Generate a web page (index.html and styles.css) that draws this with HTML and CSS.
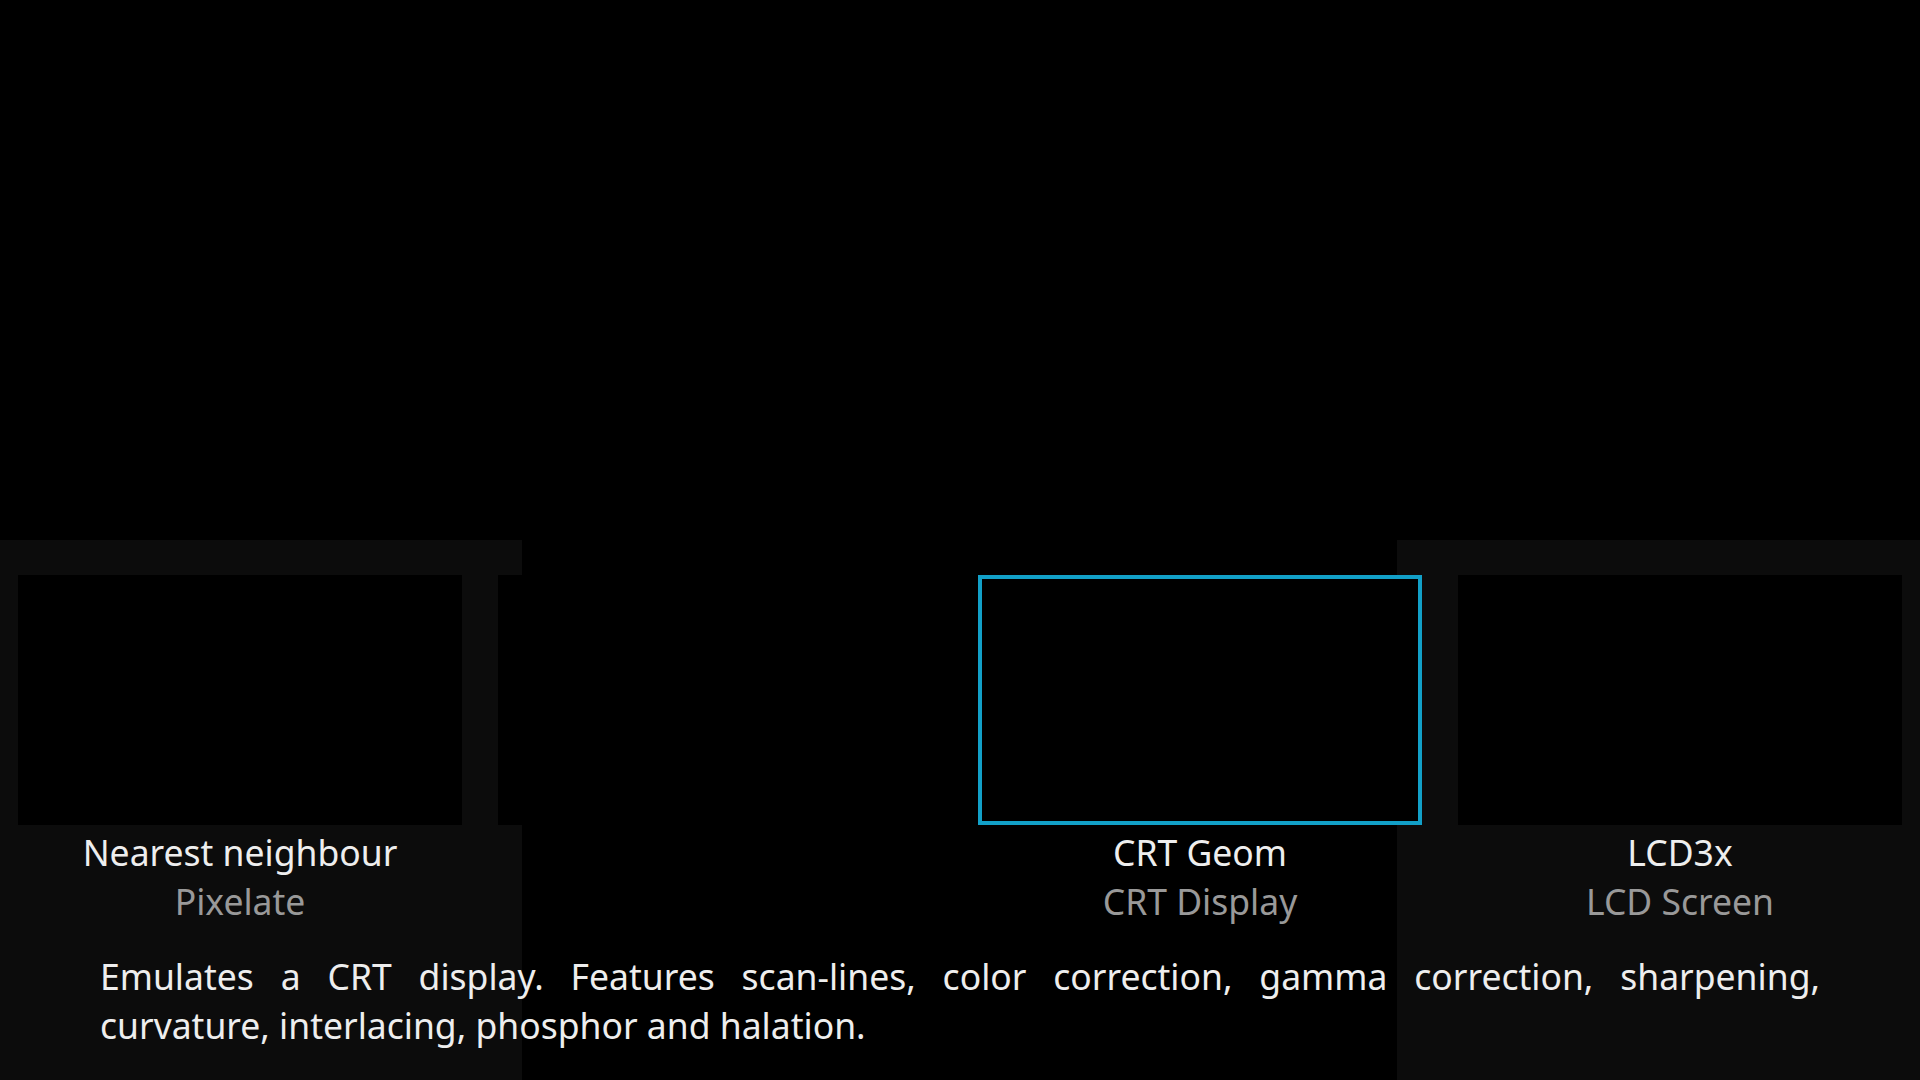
FILE: index.html
```html
<!DOCTYPE html>
<html lang="en">
<head>
<meta charset="utf-8">
<title>Video shaders</title>
<link rel="stylesheet" href="styles.css">
</head>
<body>
<div class="stage">
  <div class="preview"></div>
  <section class="shelf">
    <div class="items">
      <div class="item">
        <div class="thumb"></div>
        <div class="label">Nearest neighbour</div>
        <div class="sublabel">Pixelate</div>
      </div>
      <div class="item">
        <div class="thumb"></div>
      </div>
      <div class="item focused">
        <div class="thumb"></div>
        <div class="label">CRT Geom</div>
        <div class="sublabel">CRT Display</div>
      </div>
      <div class="item">
        <div class="thumb"></div>
        <div class="label">LCD3x</div>
        <div class="sublabel">LCD Screen</div>
      </div>
    </div>
    <p class="description">Emulates a CRT display. Features scan-lines, color correction, gamma correction, sharpening, curvature, interlacing, phosphor and halation.</p>
  </section>
</div>
</body>
</html>
```
FILE: styles.css
```css
html, body {
  margin: 0;
  padding: 0;
  background: #000;
}

body {
  width: 1920px;
  height: 1080px;
  overflow: hidden;
  font-family: "Noto Sans", "Open Sans", sans-serif;
  font-weight: 370;
  color: #eeeeee;
}

.stage {
  display: flex;
  flex-direction: column;
  height: 1080px;
}

.preview {
  height: 540px;
  background: #000;
}

.shelf {
  height: 540px;
  padding-top: 35px;
  box-sizing: border-box;
  background: linear-gradient(to right,
    #0c0c0c 0, #0c0c0c 522px,
    #000 522px, #000 1397px,
    #0c0c0c 1397px, #0c0c0c 100%);
}

.items {
  display: flex;
  gap: 36px;
  padding-left: 18px;
  height: 351px;
  align-items: flex-start;
}

.item {
  width: 444px;
  flex: none;
  display: flex;
  flex-direction: column;
  align-items: center;
}

.thumb {
  width: 444px;
  height: 250px;
  box-sizing: border-box;
  background: #000;
  margin-bottom: 3px;
}

.focused .thumb {
  border: 4px solid #12a0c8;
}

.label,
.sublabel {
  font-size: 35.5px;
  line-height: 49px;
  white-space: nowrap;
}

.label {
  color: #eeeeee;
}

.sublabel {
  color: #999;
}

.description {
  margin: 26px 100px 0;
  font-size: 35.5px;
  line-height: 49px;
  text-align: justify;
  color: #eeeeee;
}
```
